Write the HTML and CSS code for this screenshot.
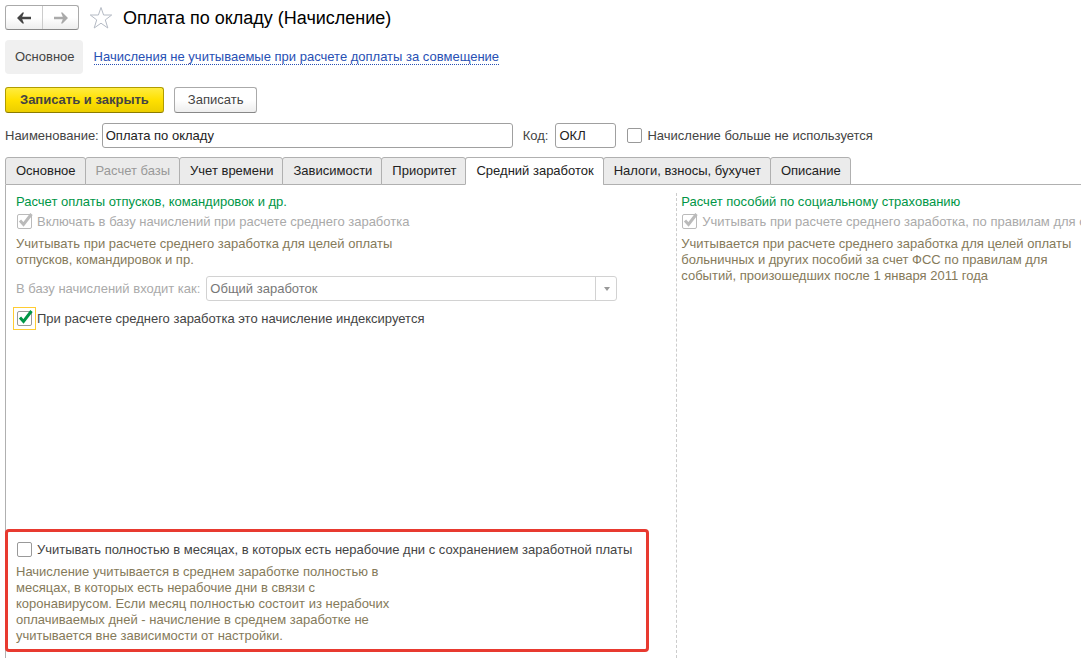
FILE: index.html
```html
<!DOCTYPE html>
<html lang="ru">
<head>
<meta charset="UTF-8">
<title>Оплата по окладу (Начисление)</title>
<link rel="stylesheet" href="styles.css">
</head>
<body>
<header class="title-bar">
    <div class="history">
        <button type="button" aria-label="Назад">
            <svg width="16" height="12" viewBox="0 0 16 12"><path d="M1 6 6.5 .5H8L6.2 4.7H15v2.6H6.2L8 11.5H6.5z" fill="#444"/></svg>
        </button>
        <button type="button" aria-label="Вперед">
            <svg width="16" height="12" viewBox="0 0 16 12"><path d="M15 6 9.5 .5H8l1.8 4.2H1v2.6h8.8L8 11.5h1.5z" fill="#aaa"/></svg>
        </button>
    </div>
    <button type="button" class="star" aria-label="Избранное">
        <svg width="24" height="24" viewBox="0 0 24 24"><path d="M12 1.5 14.6 9H22.7L16.3 13.9 18.8 22 12 17.2 5.2 22 7.7 13.9 1.3 9H9.4z" fill="#fff" stroke="#b4bac4"/></svg>
    </button>
    <h1>Оплата по окладу (Начисление)</h1>
</header>

<nav class="sections">
    <span class="current">Основное</span>
    <a href="#">Начисления не учитываемые при расчете доплаты за совмещение</a>
</nav>

<div class="commands">
    <button type="button" class="btn primary">Записать и закрыть</button>
    <button type="button" class="btn">Записать</button>
</div>

<div class="fields">
    <label for="name">Наименование:</label>
    <input type="text" id="name" class="text name" value="Оплата по окладу">
    <label for="code" class="code-label">Код:</label>
    <input type="text" id="code" class="text code" value="ОКЛ">
    <label class="check unused">
        <span class="box"><input type="checkbox"></span>
        Начисление больше не используется
    </label>
</div>

<div class="tabs" role="tablist">
    <button type="button" role="tab">Основное</button>
    <button type="button" role="tab" disabled>Расчет базы</button>
    <button type="button" role="tab">Учет времени</button>
    <button type="button" role="tab">Зависимости</button>
    <button type="button" role="tab">Приоритет</button>
    <button type="button" role="tab" class="active" aria-selected="true">Средний заработок</button>
    <button type="button" role="tab">Налоги, взносы, бухучет</button>
    <button type="button" role="tab">Описание</button>
</div>

<main class="panel">
    <section class="vacation">
        <h2>Расчет оплаты отпусков, командировок и др.</h2>
        <label class="check disabled">
            <span class="box">
                <input type="checkbox" checked disabled>
                <svg width="17" height="17" viewBox="0 0 17 17"><path d="M4 7.5 7.5 11.5 15.5 1" fill="none" stroke="#bbb" stroke-width="3"/></svg>
            </span>
            Включать в базу начислений при расчете среднего заработка
        </label>
        <p class="hint">Учитывать при расчете среднего заработка для целей оплаты отпусков, командировок и пр.</p>
        <div class="base">
            <label for="base">В базу начислений входит как:</label>
            <div class="select">
                <select id="base" disabled>
                    <option>Общий заработок</option>
                </select>
                <span class="arrow"><svg width="6" height="4" viewBox="0 0 6 4"><path d="M0 0h6L3 4z" fill="#999"/></svg></span>
            </div>
        </div>
        <label class="check">
            <span class="box focused">
                <input type="checkbox" checked>
                <svg width="17" height="17" viewBox="0 0 17 17"><path d="M4 7.5 7.5 11.5 15.5 1" fill="none" stroke="#009646" stroke-width="3"/></svg>
            </span>
            При расчете среднего заработка это начисление индексируется
        </label>
        <div class="marked">
            <label class="check">
                <span class="box"><input type="checkbox"></span>
                Учитывать полностью в месяцах, в которых есть нерабочие дни с сохранением заработной платы
            </label>
            <p class="hint">Начисление учитывается в среднем заработке полностью в месяцах, в которых есть нерабочие дни в связи с коронавирусом. Если месяц полностью состоит из нерабочих оплачиваемых дней - начисление в среднем заработке не учитывается вне зависимости от настройки.</p>
        </div>
    </section>
    <section class="social">
        <h2>Расчет пособий по социальному страхованию</h2>
        <label class="check disabled">
            <span class="box">
                <input type="checkbox" checked disabled>
                <svg width="17" height="17" viewBox="0 0 17 17"><path d="M4 7.5 7.5 11.5 15.5 1" fill="none" stroke="#bbb" stroke-width="3"/></svg>
            </span>
            Учитывать при расчете среднего заработка, по правилам для с
        </label>
        <p class="hint">Учитывается при расчете среднего заработка для целей оплаты больничных и других пособий за счет ФСС по правилам для событий, произошедших после 1 января 2011 года</p>
    </section>
</main>
</body>
</html>
```
FILE: styles.css
```css
* {
    box-sizing: border-box;
}
body {
    display: flex;
    flex-direction: column;
    min-height: 100vh;
    margin: 0;
    padding: 5px 0 0 5px;
    overflow-x: hidden;
    background: #fff;
    color: #444;
    font: 13px/16px Arial, "Liberation Sans", sans-serif;
}
button, input, select {
    margin: 0;
    font: inherit;
    color: #444;
}
h1, h2, p {
    margin: 0;
    font-weight: normal;
}
svg {
    display: block;
}

/* Заголовок */
.title-bar {
    display: flex;
    align-items: center;
    height: 25px;
}
.history {
    display: flex;
    height: 25px;
    border: 1px solid #aaa;
    border-bottom-color: #888;
    border-radius: 3px;
    background: linear-gradient(#fff 50%, #eee);
}
.history button {
    display: flex;
    align-items: center;
    justify-content: center;
    width: 36px;
    padding: 0;
    border: none;
    background: none;
}
.history button + button {
    border-left: 1px solid #ccc;
}
.star {
    margin: 0 10px;
    padding: 0;
    border: none;
    background: none;
}
h1 {
    color: #000;
    font-size: 18px;
    line-height: 24px;
    white-space: nowrap;
}

/* Навигация */
.sections {
    display: flex;
    align-items: center;
    gap: 11px;
    margin-top: 10px;
}
.current {
    padding: 9px 8px 9px 10px;
    border-radius: 4px;
    background: #f0f0f0;
}
.sections a {
    border-bottom: 1px dotted #2850b4;
    color: #2850b4;
    line-height: 14px;
    text-decoration: none;
}

/* Кнопки */
.commands {
    display: flex;
    gap: 10px;
    margin-top: 13px;
}
.btn {
    height: 26px;
    padding: 0 13px;
    border: 1px solid #aaa;
    border-bottom-color: #888;
    border-radius: 3px;
    background: linear-gradient(#fff 50%, #eee);
}
.btn.primary {
    padding: 0 14px;
    border-color: #b09c00;
    border-bottom-color: #8c7c00;
    background: linear-gradient(#ffec40, #ffe000 50%, #ecce00);
    font-weight: bold;
}

/* Поля */
.fields {
    display: flex;
    align-items: center;
    margin-top: 10px;
    white-space: nowrap;
}
.text {
    height: 25px;
    padding: 0 3px;
    border: 1px solid #a0a0a0;
    border-radius: 3px;
    color: #222;
}
.name {
    flex: 0 1 411px;
    margin-left: 3px;
}
.code-label {
    margin-left: 10px;
}
.code {
    width: 61px;
    margin-left: 7px;
}
.unused {
    margin-left: 10px;
}

/* Флажки */
.check {
    display: flex;
    align-items: center;
    gap: 4px;
    white-space: nowrap;
}
.box {
    display: grid;
    flex: none;
    width: 17px;
    height: 17px;
}
.box input, .box svg {
    grid-area: 1 / 1;
}
.box input {
    width: 15px;
    height: 15px;
    border: 1px solid #999;
    border-radius: 2px;
    background: #fff;
    appearance: none;
    place-self: center;
}
.box svg {
    z-index: 1;
    pointer-events: none;
}
.focused {
    outline: 1px solid #fc3;
    outline-offset: 2px;
}
.disabled {
    color: #aaa;
}
.disabled input {
    border-color: #bbb;
}

/* Вкладки */
.tabs {
    display: flex;
    margin-top: 9px;
}
.tabs::after {
    content: "";
    flex: 1;
    border-bottom: 1px solid #b0b0b0;
}
.tabs button {
    height: 28px;
    margin-right: -1px;
    padding: 0 9px 0 10px;
    border: 1px solid #b0b0b0;
    border-radius: 3px 3px 0 0;
    background: #ebebeb;
    color: #222;
    white-space: nowrap;
}
.tabs button:disabled {
    color: #999;
}
.tabs .active {
    border-bottom-color: #fff;
    background: #fff;
}

/* Содержимое вкладки */
.panel {
    display: grid;
    flex: 1;
    grid-template-columns: 62% 1fr;
    padding: 8px 0 0 10px;
    border-left: 1px solid #b0b0b0;
}
h2 {
    color: #009646;
    font-size: 13px;
    line-height: 18px;
}
.hint {
    max-width: 390px;
    color: #857a5a;
}
.vacation {
    display: flex;
    flex-direction: column;
    min-width: 0;
}
.vacation h2, .social h2 {
    margin-bottom: 2px;
}
.vacation > .disabled, .social > .disabled {
    margin-bottom: 6px;
}
.vacation .hint {
    max-width: 385px;
}
.base {
    display: flex;
    align-items: center;
    gap: 6px;
    margin: 8px 59px 9px 0;
    color: #aaa;
    white-space: nowrap;
}
.select {
    display: grid;
    flex: 1;
    height: 25px;
}
.select select, .arrow {
    grid-area: 1 / 1;
}
.select select {
    padding: 0 24px 0 3px;
    border: 1px solid #d2d2d2;
    border-radius: 3px;
    background: #fff;
    color: #777;
    opacity: 1;
    appearance: none;
}
.arrow {
    display: flex;
    align-items: center;
    justify-content: center;
    justify-self: end;
    width: 22px;
    border-left: 1px solid #d2d2d2;
    pointer-events: none;
}
.marked {
    margin: auto 27px 6px -11px;
    padding: 9px 8px 5px;
    border: 3px solid #e83a30;
    border-radius: 4px;
    background: #fff;
}
.marked .hint {
    margin-top: 6px;
}
.social {
    min-width: 0;
    overflow: hidden;
    padding-left: 4px;
    border-left: 1px dashed #ccc;
}
```
